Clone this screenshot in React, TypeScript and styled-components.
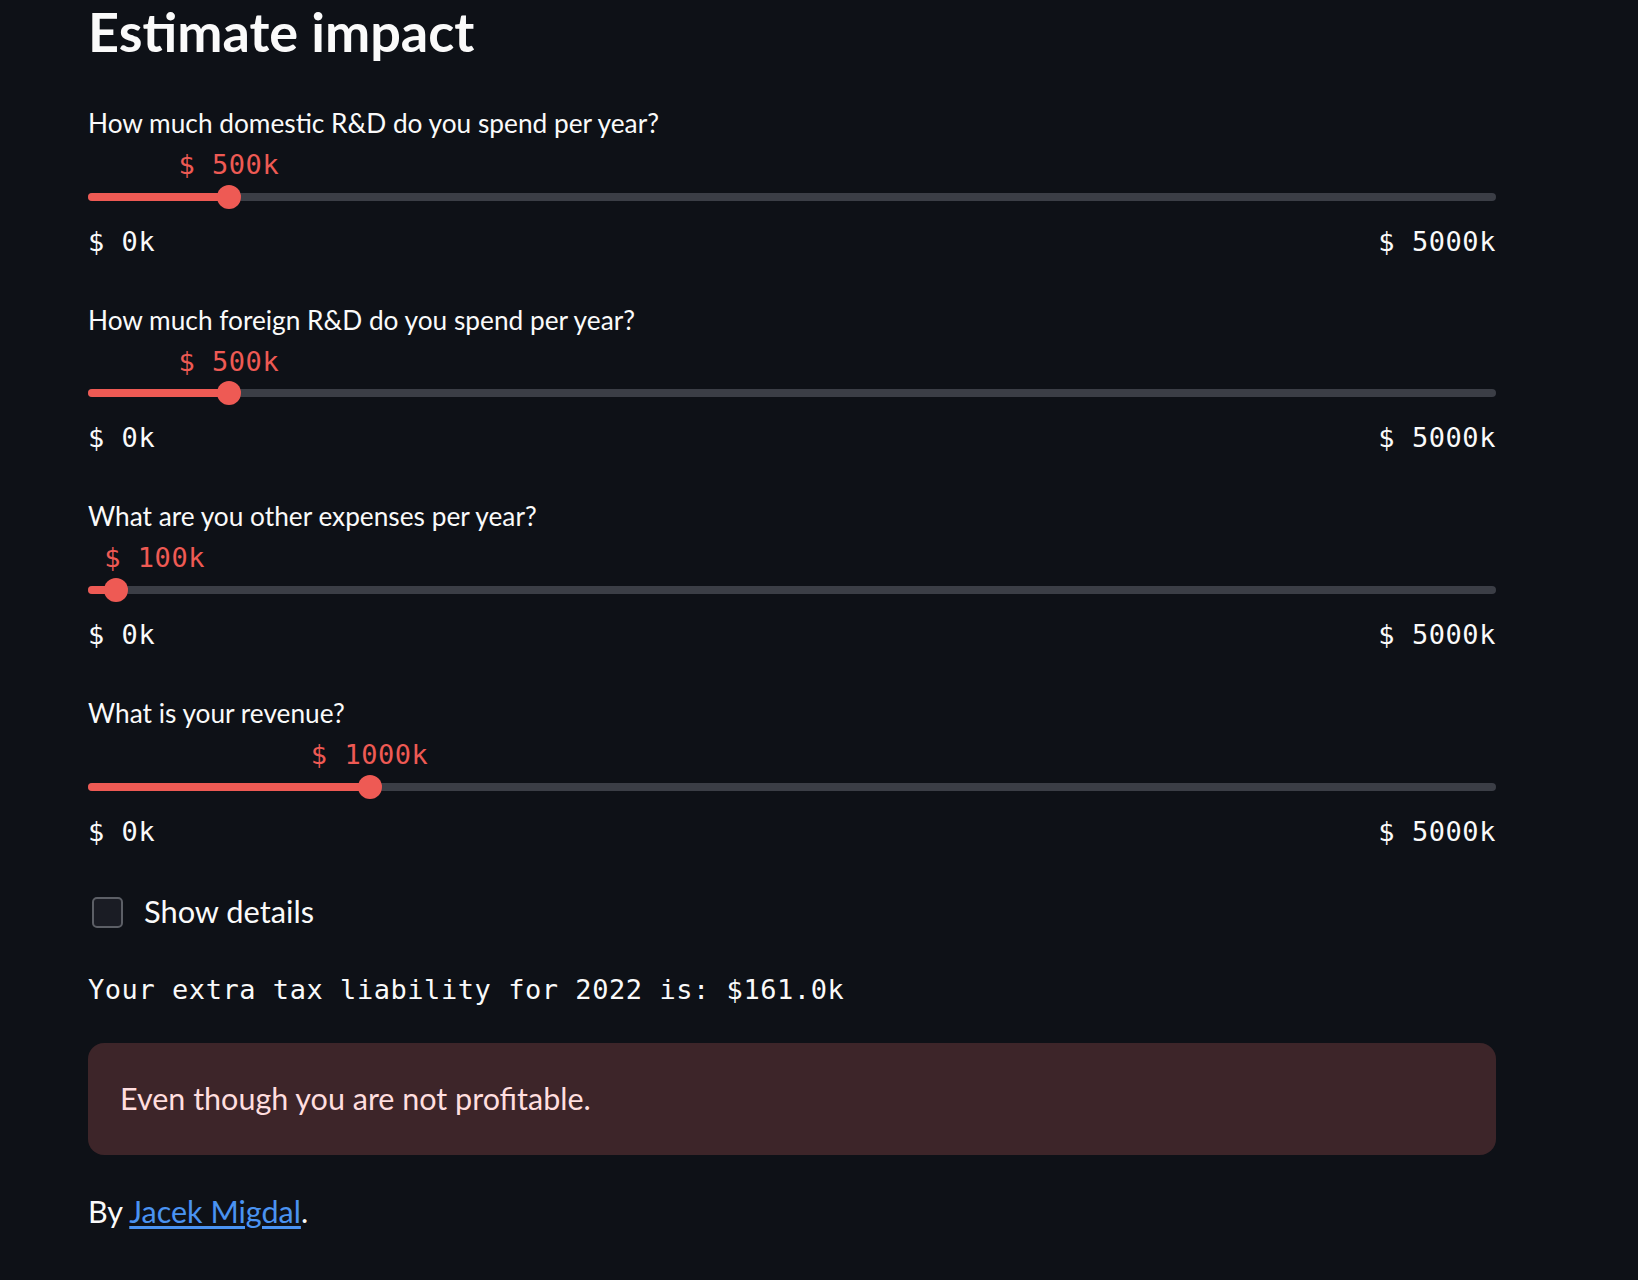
import React from "react";
import styled, { createGlobalStyle, css } from "styled-components";

const RED = "#ee5a54";
const SANS = `Lato, "Noto Sans", sans-serif`;
const MONO = `"DejaVu Sans Mono", "Liberation Mono", monospace`;

const GlobalStyle = createGlobalStyle`
  html, body {
    margin: 0;
    padding: 0;
    background: #0e1117;
  }
  body {
    font-family: ${SANS};
    color: #fafafa;
  }
`;

const Page = styled.main`
  width: 1408px;
  min-height: 1280px;
  padding-left: 88px;
  display: flex;
  flex-direction: column;
`;

const Title = styled.h1`
  margin: 0;
  font-family: ${SANS};
  font-weight: 700;
  font-size: 54px;
  line-height: 64px;
  color: #fafafa;
`;

const Form = styled.div`
  display: flex;
  flex-direction: column;
  gap: 47.4px;
  margin-top: 41.4px;
`;

const Field = styled.section`
  display: flex;
  flex-direction: column;
`;

const FieldLabel = styled.label`
  padding-top: 1.6px;
  font-size: 26.25px;
  line-height: 32px;
  color: #fafafa;
`;

const Track = styled.div`
  position: relative;
  height: 8px;
  margin-top: 53.7px;
  border-radius: 4px;
  background: #3b3e46;
`;

const Fill = styled.div`
  height: 100%;
  border-radius: 4px;
  background: ${RED};
`;

const Thumb = styled.div`
  position: absolute;
  top: 50%;
  width: 24px;
  height: 24px;
  margin: -12px 0 0 -12px;
  border-radius: 50%;
  background: ${RED};
`;

const monoText = css`
  font-family: ${MONO};
  font-size: 27px;
  line-height: 28px;
  letter-spacing: 0.55px;
`;

const ThumbValue = styled.div<{ $align: "center" | "start" | "end" }>`
  ${monoText};
  position: absolute;
  top: -33.8px;
  white-space: nowrap;
  color: ${RED};
  ${(p) =>
    p.$align === "center"
      ? css`
          left: 50%;
          transform: translateX(-50%);
        `
      : p.$align === "start"
      ? css`
          left: 0;
        `
      : css`
          right: 0;
        `}
`;

const Ticks = styled.div`
  ${monoText};
  display: flex;
  justify-content: space-between;
  margin-top: 27px;
  margin-bottom: -1px;
  color: #fafafa;
`;

const CheckRow = styled.label`
  display: flex;
  align-items: center;
  gap: 21px;
  height: 32px;
  margin-top: 51.5px;
  padding-left: 4px;
`;

const Box = styled.span`
  width: 27px;
  height: 27px;
  border: 2px solid #5c5f66;
  border-radius: 5px;
  background: #1a1c24;
`;

const CheckText = styled.span`
  font-size: 30.8px;
  line-height: 32px;
  color: #fafafa;
`;

const Output = styled.div`
  ${monoText};
  margin-top: 47.6px;
  white-space: pre;
  color: #fafafa;
`;

const Alert = styled.div`
  margin-top: 39.7px;
  padding: 32px 32px 32.4px;
  border-radius: 16px;
  background: #3d2529;
  color: #ffdedf;
  font-size: 30.5px;
  line-height: 47px;
`;

const Footer = styled.p`
  margin: 36.6px 0 0;
  font-size: 30.5px;
  line-height: 40px;
  color: #fafafa;
`;

const Link = styled.a`
  color: #4a93f2;
  text-decoration: underline;
  text-underline-offset: 3px;
`;

const TRACK_W = 1408;
const CHAR_W = 27 * 0.602 + 0.55;

type SliderProps = { label: string; value: number; max: number };

function Slider({ label, value, max }: SliderProps) {
  const pct = (value / max) * 100;
  const text = `$ ${value}k`;
  const center = (value / max) * TRACK_W;
  const half = (text.length * CHAR_W) / 2;
  const align: "center" | "start" | "end" =
    center - half < 0 ? "start" : center + half > TRACK_W ? "end" : "center";
  return (
    <Field>
      <FieldLabel>{label}</FieldLabel>
      <Track>
        <Fill style={{ width: `${pct}%` }} />
        <Thumb style={{ left: `${pct}%` }}>
          <ThumbValue $align={align}>{text}</ThumbValue>
        </Thumb>
      </Track>
      <Ticks>
        <span>$ 0k</span>
        <span>$ {max}k</span>
      </Ticks>
    </Field>
  );
}

const sliders: SliderProps[] = [
  { label: "How much domestic R&D do you spend per year?", value: 500, max: 5000 },
  { label: "How much foreign R&D do you spend per year?", value: 500, max: 5000 },
  { label: "What are you other expenses per year?", value: 100, max: 5000 },
  { label: "What is your revenue?", value: 1000, max: 5000 },
];

export default function App() {
  return (
    <>
      <GlobalStyle />
      <Page>
        <Title>Estimate impact</Title>
        <Form>
          {sliders.map((s) => (
            <Slider key={s.label} {...s} />
          ))}
        </Form>
        <CheckRow>
          <Box />
          <CheckText>Show details</CheckText>
        </CheckRow>
        <Output>Your extra tax liability for 2022 is: $161.0k</Output>
        <Alert>Even though you are not profitable.</Alert>
        <Footer>
          By <Link href="#">Jacek Migdal</Link>.
        </Footer>
      </Page>
    </>
  );
}
